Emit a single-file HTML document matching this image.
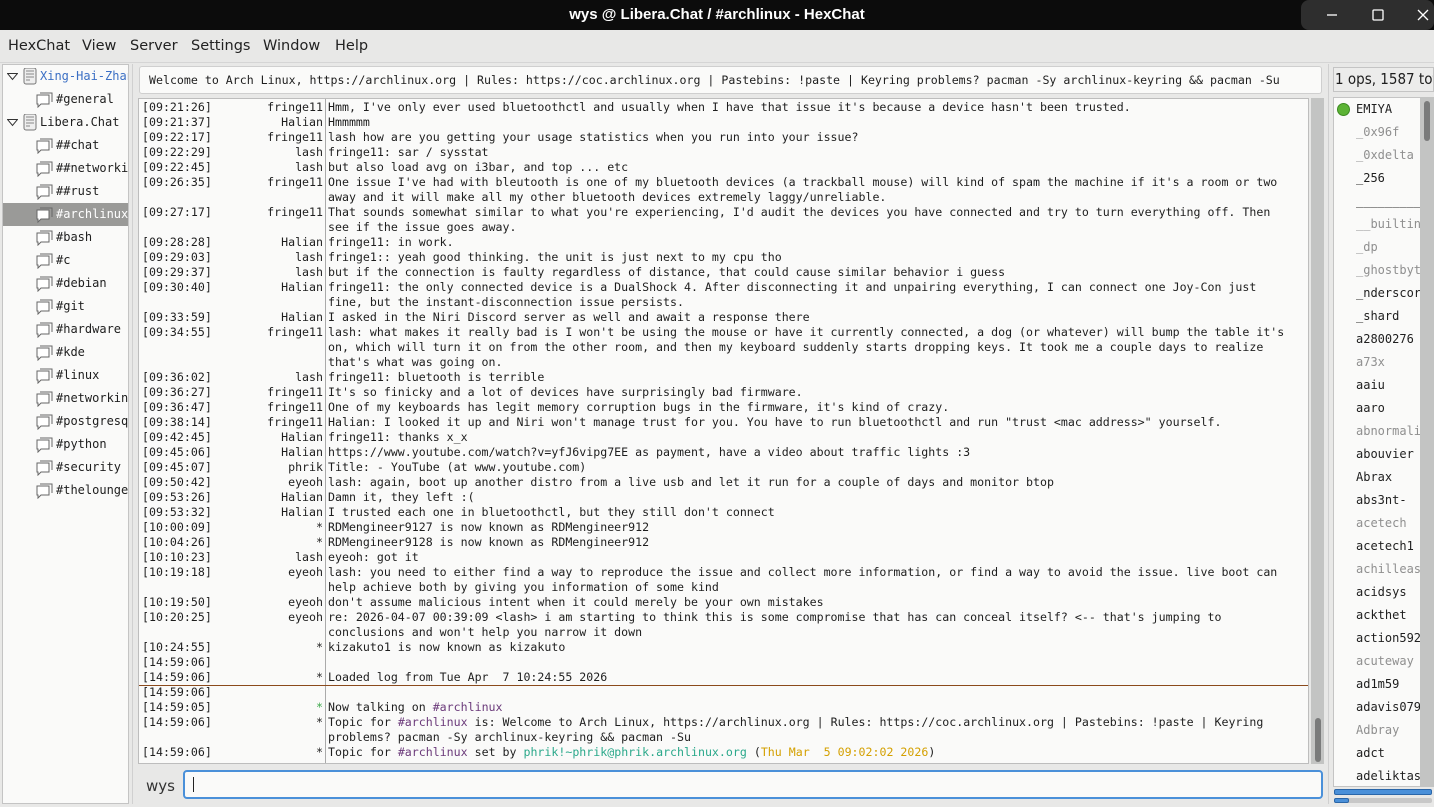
<!DOCTYPE html>
<html><head><meta charset="utf-8"><style>
*{margin:0;padding:0;box-sizing:border-box}
body{width:1434px;height:807px;background:#e8e8e7;font-family:"DejaVu Sans Mono","Liberation Mono",monospace;position:relative;overflow:hidden;color:#1e1e1e}
.abs{position:absolute}
#title{left:0;top:0;width:1434px;height:30px;background:#0c0c0c;color:#fff;font:bold 15px "Liberation Sans",sans-serif;text-align:center;line-height:30px}
.wb{top:0;width:44px;height:30px;background:#2e2e2e;border-radius:8px}
#menu{left:0;top:30px;height:32px;width:600px;font:14.5px "DejaVu Sans",sans-serif;line-height:32px;color:#222}
#menu span{position:absolute;top:0}
#tree{left:2px;top:64px;width:127px;height:740px;background:#fafaf9;border:1px solid #c4c4c4;overflow:hidden;font-size:12px}
.ti{position:absolute;height:23px;line-height:23px;white-space:nowrap}
.sel{background:#9a9a98;color:#fff}
#topic{left:139px;top:66px;width:1183px;height:28px;background:#fafaf9;border:1px solid #cfcfcf;border-radius:3px;font-size:11.6px;line-height:27px;padding-left:9px;white-space:nowrap;overflow:hidden}
#chat{left:138px;top:98px;width:1171px;height:666px;background:#fafaf9;border:1px solid #bdbdbd;overflow:hidden;font-size:11.6px}
#sep{left:186px;top:0;width:1px;height:666px;background:#aaa}
.r{position:absolute;left:0;height:15px;line-height:15px;white-space:nowrap;width:1170px}
.ts{position:absolute;left:3px}
.nk{position:absolute;right:986px;text-align:right}
.tx{position:absolute;left:189px}
.p{color:#6b3a7a}.g{color:#3da84b}.t{color:#2aa88a}.y{color:#d4a000}
#sb{left:1311px;top:98px;width:13px;height:666px;background:#c3c4c3}
#users{left:1333px;top:97px;width:88px;height:690px;background:#fafaf9;border:1px solid #c4c4c4;font-size:12px;overflow:hidden}
.u{position:absolute;left:22px;height:23px;line-height:23px;white-space:nowrap}
.gy{color:#8f8f8f}
</style></head><body>
<div id="title" class="abs">wys @ Libera.Chat / #archlinux - HexChat</div>
<div class="abs wb" style="left:1301px;border-radius:8px 0 0 8px"></div>
<div class="abs wb" style="left:1345px;border-radius:0"></div>
<div class="abs wb" style="left:1389px;width:45px;border-radius:0 8px 8px 0"></div>
<svg class="abs" style="left:1301px;top:0" width="133" height="30"><g stroke="#fff" stroke-width="1.3" fill="none"><path d="M26 15h10"/><rect x="72" y="10" width="10" height="10" rx="1"/><path d="M117 10l10 10M127 10l-10 10"/></g></svg>
<div id="menu" class="abs"><span style="left:8px">HexChat</span><span style="left:82px">View</span><span style="left:130px">Server</span><span style="left:191px">Settings</span><span style="left:263px">Window</span><span style="left:335px">Help</span></div>
<div class="abs" style="left:0;top:62px;width:1434px;height:1px;background:#d5d5d5"></div>

<div id="tree" class="abs">
<svg width="0" height="0" style="position:absolute"><defs>
<g id="ch"><path d="M1 3h12v9h-8l-3 3v-3h-1z" fill="#fff" stroke="#666"/><path d="M4 1h12v9" fill="none" stroke="#666"/></g>
<g id="sv"><rect x="1" y="0" width="12" height="16" rx="2" fill="#eee" stroke="#777"/><path d="M3 3h8M3 6h8M3 9h8M3 12h4" stroke="#888"/></g>
<g id="ar"><path d="M0.5 0.5h10l-5 6z" fill="none" stroke="#333"/></g></defs></svg>
<div class="ti" style="top:0;left:0;width:125px"><svg style="position:absolute;left:4px;top:8px" width="11" height="8"><use href="#ar"/></svg><svg style="position:absolute;left:20px;top:3px" width="15" height="17"><use href="#sv"/></svg><span style="position:absolute;left:37px;color:#3b6fc4">Xing-Hai-Zhang</span></div>
<div class="ti" style="top:23px;left:33px"><svg style="position:absolute;left:0;top:4px" width="17" height="16"><use href="#ch"/></svg><span style="margin-left:20px">#general</span></div>
<div class="ti" style="top:46px;left:0;width:125px"><svg style="position:absolute;left:4px;top:8px" width="11" height="8"><use href="#ar"/></svg><svg style="position:absolute;left:20px;top:3px" width="15" height="17"><use href="#sv"/></svg><span style="position:absolute;left:37px">Libera.Chat</span></div>
<div class="ti" style="top:69px;left:33px"><svg style="position:absolute;left:0;top:4px" width="17" height="16"><use href="#ch"/></svg><span style="margin-left:20px">##chat</span></div>
<div class="ti" style="top:92px;left:33px"><svg style="position:absolute;left:0;top:4px" width="17" height="16"><use href="#ch"/></svg><span style="margin-left:20px">##networking</span></div>
<div class="ti" style="top:115px;left:33px"><svg style="position:absolute;left:0;top:4px" width="17" height="16"><use href="#ch"/></svg><span style="margin-left:20px">##rust</span></div>
<div class="ti sel" style="top:138px;left:0;width:125px"><svg style="position:absolute;left:33px;top:4px" width="17" height="16"><use href="#ch"/></svg><span style="position:absolute;left:53px">#archlinux</span></div>
<div class="ti" style="top:161px;left:33px"><svg style="position:absolute;left:0;top:4px" width="17" height="16"><use href="#ch"/></svg><span style="margin-left:20px">#bash</span></div>
<div class="ti" style="top:184px;left:33px"><svg style="position:absolute;left:0;top:4px" width="17" height="16"><use href="#ch"/></svg><span style="margin-left:20px">#c</span></div>
<div class="ti" style="top:207px;left:33px"><svg style="position:absolute;left:0;top:4px" width="17" height="16"><use href="#ch"/></svg><span style="margin-left:20px">#debian</span></div>
<div class="ti" style="top:230px;left:33px"><svg style="position:absolute;left:0;top:4px" width="17" height="16"><use href="#ch"/></svg><span style="margin-left:20px">#git</span></div>
<div class="ti" style="top:253px;left:33px"><svg style="position:absolute;left:0;top:4px" width="17" height="16"><use href="#ch"/></svg><span style="margin-left:20px">#hardware</span></div>
<div class="ti" style="top:276px;left:33px"><svg style="position:absolute;left:0;top:4px" width="17" height="16"><use href="#ch"/></svg><span style="margin-left:20px">#kde</span></div>
<div class="ti" style="top:299px;left:33px"><svg style="position:absolute;left:0;top:4px" width="17" height="16"><use href="#ch"/></svg><span style="margin-left:20px">#linux</span></div>
<div class="ti" style="top:322px;left:33px"><svg style="position:absolute;left:0;top:4px" width="17" height="16"><use href="#ch"/></svg><span style="margin-left:20px">#networking</span></div>
<div class="ti" style="top:345px;left:33px"><svg style="position:absolute;left:0;top:4px" width="17" height="16"><use href="#ch"/></svg><span style="margin-left:20px">#postgresql</span></div>
<div class="ti" style="top:368px;left:33px"><svg style="position:absolute;left:0;top:4px" width="17" height="16"><use href="#ch"/></svg><span style="margin-left:20px">#python</span></div>
<div class="ti" style="top:391px;left:33px"><svg style="position:absolute;left:0;top:4px" width="17" height="16"><use href="#ch"/></svg><span style="margin-left:20px">#security</span></div>
<div class="ti" style="top:414px;left:33px"><svg style="position:absolute;left:0;top:4px" width="17" height="16"><use href="#ch"/></svg><span style="margin-left:20px">#thelounge</span></div>
</div>
<div class="abs" style="left:132px;top:64px;width:1px;height:740px;background:#d0d0d0"></div>

<div id="topic" class="abs">Welcome to Arch Linux, https://archlinux.org | Rules: https://coc.archlinux.org | Pastebins: !paste | Keyring problems? pacman -Sy archlinux-keyring &amp;&amp; pacman -Su</div>

<div id="chat" class="abs">
<div id="sep" class="abs"></div>
<div class="r" style="top:1px"><span class="ts">[09:21:26]</span><span class="nk">fringe11</span><span class="tx">Hmm, I've only ever used bluetoothctl and usually when I have that issue it's because a device hasn't been trusted.</span></div>
<div class="r" style="top:16px"><span class="ts">[09:21:37]</span><span class="nk">Halian</span><span class="tx">Hmmmmm</span></div>
<div class="r" style="top:31px"><span class="ts">[09:22:17]</span><span class="nk">fringe11</span><span class="tx">lash how are you getting your usage statistics when you run into your issue?</span></div>
<div class="r" style="top:46px"><span class="ts">[09:22:29]</span><span class="nk">lash</span><span class="tx">fringe11: sar / sysstat</span></div>
<div class="r" style="top:61px"><span class="ts">[09:22:45]</span><span class="nk">lash</span><span class="tx">but also load avg on i3bar, and top ... etc</span></div>
<div class="r" style="top:76px"><span class="ts">[09:26:35]</span><span class="nk">fringe11</span><span class="tx">One issue I've had with bleutooth is one of my bluetooth devices (a trackball mouse) will kind of spam the machine if it's a room or two</span></div>
<div class="r" style="top:91px"><span class="tx">away and it will make all my other bluetooth devices extremely laggy/unreliable.</span></div>
<div class="r" style="top:106px"><span class="ts">[09:27:17]</span><span class="nk">fringe11</span><span class="tx">That sounds somewhat similar to what you're experiencing, I'd audit the devices you have connected and try to turn everything off. Then</span></div>
<div class="r" style="top:121px"><span class="tx">see if the issue goes away.</span></div>
<div class="r" style="top:136px"><span class="ts">[09:28:28]</span><span class="nk">Halian</span><span class="tx">fringe11: in work.</span></div>
<div class="r" style="top:151px"><span class="ts">[09:29:03]</span><span class="nk">lash</span><span class="tx">fringe1:: yeah good thinking. the unit is just next to my cpu tho</span></div>
<div class="r" style="top:166px"><span class="ts">[09:29:37]</span><span class="nk">lash</span><span class="tx">but if the connection is faulty regardless of distance, that could cause similar behavior i guess</span></div>
<div class="r" style="top:181px"><span class="ts">[09:30:40]</span><span class="nk">Halian</span><span class="tx">fringe11: the only connected device is a DualShock 4. After disconnecting it and unpairing everything, I can connect one Joy-Con just</span></div>
<div class="r" style="top:196px"><span class="tx">fine, but the instant-disconnection issue persists.</span></div>
<div class="r" style="top:211px"><span class="ts">[09:33:59]</span><span class="nk">Halian</span><span class="tx">I asked in the Niri Discord server as well and await a response there</span></div>
<div class="r" style="top:226px"><span class="ts">[09:34:55]</span><span class="nk">fringe11</span><span class="tx">lash: what makes it really bad is I won't be using the mouse or have it currently connected, a dog (or whatever) will bump the table it's</span></div>
<div class="r" style="top:241px"><span class="tx">on, which will turn it on from the other room, and then my keyboard suddenly starts dropping keys. It took me a couple days to realize</span></div>
<div class="r" style="top:256px"><span class="tx">that's what was going on.</span></div>
<div class="r" style="top:271px"><span class="ts">[09:36:02]</span><span class="nk">lash</span><span class="tx">fringe11: bluetooth is terrible</span></div>
<div class="r" style="top:286px"><span class="ts">[09:36:27]</span><span class="nk">fringe11</span><span class="tx">It's so finicky and a lot of devices have surprisingly bad firmware.</span></div>
<div class="r" style="top:301px"><span class="ts">[09:36:47]</span><span class="nk">fringe11</span><span class="tx">One of my keyboards has legit memory corruption bugs in the firmware, it's kind of crazy.</span></div>
<div class="r" style="top:316px"><span class="ts">[09:38:14]</span><span class="nk">fringe11</span><span class="tx">Halian: I looked it up and Niri won't manage trust for you. You have to run bluetoothctl and run "trust &lt;mac address&gt;" yourself.</span></div>
<div class="r" style="top:331px"><span class="ts">[09:42:45]</span><span class="nk">Halian</span><span class="tx">fringe11: thanks x_x</span></div>
<div class="r" style="top:346px"><span class="ts">[09:45:06]</span><span class="nk">Halian</span><span class="tx">https://www.youtube.com/watch?v=yfJ6vipg7EE as payment, have a video about traffic lights :3</span></div>
<div class="r" style="top:361px"><span class="ts">[09:45:07]</span><span class="nk">phrik</span><span class="tx">Title: - YouTube (at www.youtube.com)</span></div>
<div class="r" style="top:376px"><span class="ts">[09:50:42]</span><span class="nk">eyeoh</span><span class="tx">lash: again, boot up another distro from a live usb and let it run for a couple of days and monitor btop</span></div>
<div class="r" style="top:391px"><span class="ts">[09:53:26]</span><span class="nk">Halian</span><span class="tx">Damn it, they left :(</span></div>
<div class="r" style="top:406px"><span class="ts">[09:53:32]</span><span class="nk">Halian</span><span class="tx">I trusted each one in bluetoothctl, but they still don't connect</span></div>
<div class="r" style="top:421px"><span class="ts">[10:00:09]</span><span class="nk">*</span><span class="tx">RDMengineer9127 is now known as RDMengineer912</span></div>
<div class="r" style="top:436px"><span class="ts">[10:04:26]</span><span class="nk">*</span><span class="tx">RDMengineer9128 is now known as RDMengineer912</span></div>
<div class="r" style="top:451px"><span class="ts">[10:10:23]</span><span class="nk">lash</span><span class="tx">eyeoh: got it</span></div>
<div class="r" style="top:466px"><span class="ts">[10:19:18]</span><span class="nk">eyeoh</span><span class="tx">lash: you need to either find a way to reproduce the issue and collect more information, or find a way to avoid the issue. live boot can</span></div>
<div class="r" style="top:481px"><span class="tx">help achieve both by giving you information of some kind</span></div>
<div class="r" style="top:496px"><span class="ts">[10:19:50]</span><span class="nk">eyeoh</span><span class="tx">don't assume malicious intent when it could merely be your own mistakes</span></div>
<div class="r" style="top:511px"><span class="ts">[10:20:25]</span><span class="nk">eyeoh</span><span class="tx">re: 2026-04-07 00:39:09 &lt;lash&gt; i am starting to think this is some compromise that has can conceal itself? &lt;-- that's jumping to</span></div>
<div class="r" style="top:526px"><span class="tx">conclusions and won't help you narrow it down</span></div>
<div class="r" style="top:541px"><span class="ts">[10:24:55]</span><span class="nk">*</span><span class="tx">kizakuto1 is now known as kizakuto</span></div>
<div class="r" style="top:556px"><span class="ts">[14:59:06]</span></div>
<div class="r" style="top:571px"><span class="ts">[14:59:06]</span><span class="nk">*</span><span class="tx">Loaded log from Tue Apr&nbsp; 7 10:24:55 2026</span></div>
<div class="abs" style="left:0;top:586px;width:1170px;height:1px;background:#8b4a1c"></div>
<div class="r" style="top:586px"><span class="ts">[14:59:06]</span></div>
<div class="r" style="top:601px"><span class="ts">[14:59:05]</span><span class="nk g">*</span><span class="tx">Now talking on <span class="p">#archlinux</span></span></div>
<div class="r" style="top:616px"><span class="ts">[14:59:06]</span><span class="nk">*</span><span class="tx">Topic for <span class="p">#archlinux</span> is: Welcome to Arch Linux, https://archlinux.org | Rules: https://coc.archlinux.org | Pastebins: !paste | Keyring</span></div>
<div class="r" style="top:631px"><span class="tx">problems? pacman -Sy archlinux-keyring &amp;&amp; pacman -Su</span></div>
<div class="r" style="top:646px"><span class="ts">[14:59:06]</span><span class="nk">*</span><span class="tx">Topic for <span class="p">#archlinux</span> set by <span class="t">phrik!~phrik@phrik.archlinux.org</span> (<span class="y">Thu Mar&nbsp; 5 09:02:02 2026</span>)</span></div>
</div>
<div id="sb" class="abs"><div class="abs" style="left:4px;top:620px;width:6px;height:44px;background:#7a7b7b;border-radius:3px"></div></div>
<div class="abs" style="left:1328px;top:64px;width:1px;height:740px;background:#d0d0d0"></div>

<div class="abs" style="left:146px;top:777px;font:15px 'DejaVu Sans',sans-serif;color:#333">wys</div>
<div class="abs" style="left:183px;top:770px;width:1140px;height:29px;background:#fafaf9;border:2px solid #4a90d9;border-radius:4px"><div class="abs" style="left:8px;top:5px;width:1px;height:15px;background:#222"></div></div>

<div class="abs" style="left:1333px;top:67px;width:101px;height:25px;border:1px solid #c4c4c4;font:15px 'DejaVu Sans Condensed','DejaVu Sans',sans-serif;line-height:23px;padding-left:1px;white-space:nowrap;overflow:hidden;background:#ececeb">1 ops, 1587 total</div>
<div id="users" class="abs">
<div class="abs" style="left:3px;top:5px;width:13px;height:13px;border-radius:50%;background:#5cb335;border:1px solid #3d8a22"></div>
<div class="u" style="top:0">EMIYA</div>
<div class="u gy" style="top:23px">_0x96f</div>
<div class="u gy" style="top:46px">_0xdelta</div>
<div class="u" style="top:69px">_256</div>
<div class="u" style="top:92px">__________</div>
<div class="u gy" style="top:115px">__builtin</div>
<div class="u gy" style="top:138px">_dp</div>
<div class="u gy" style="top:161px">_ghostbyte</div>
<div class="u" style="top:184px">_nderscore</div>
<div class="u" style="top:207px">_shard</div>
<div class="u" style="top:230px">a2800276</div>
<div class="u gy" style="top:253px">a73x</div>
<div class="u" style="top:276px">aaiu</div>
<div class="u" style="top:299px">aaro</div>
<div class="u gy" style="top:322px">abnormalia</div>
<div class="u" style="top:345px">abouvier</div>
<div class="u" style="top:368px">Abrax</div>
<div class="u" style="top:391px">abs3nt-</div>
<div class="u gy" style="top:414px">acetech</div>
<div class="u" style="top:437px">acetech1</div>
<div class="u gy" style="top:460px">achilleas</div>
<div class="u" style="top:483px">acidsys</div>
<div class="u" style="top:506px">ackthet</div>
<div class="u" style="top:529px">action592</div>
<div class="u gy" style="top:552px">acuteway</div>
<div class="u" style="top:575px">ad1m59</div>
<div class="u" style="top:598px">adavis079</div>
<div class="u gy" style="top:621px">Adbray</div>
<div class="u" style="top:644px">adct</div>
<div class="u" style="top:667px">adeliktas</div>
</div>
<div class="abs" style="left:1420px;top:97px;width:14px;height:690px;background:#c3c4c3"><div class="abs" style="left:4px;top:4px;width:6px;height:40px;background:#7a7b7b;border-radius:3px"></div></div>
<div class="abs" style="left:1334px;top:789px;width:98px;height:6px;background:#4a90d9;border:1px solid #2a66a8;border-radius:2px"></div>
<div class="abs" style="left:1334px;top:798px;width:98px;height:5px;background:#c8c8c8;border-radius:2px"><div style="width:15px;height:5px;background:#4a90d9;border:1px solid #2a66a8;border-radius:2px"></div></div>
</body></html>
